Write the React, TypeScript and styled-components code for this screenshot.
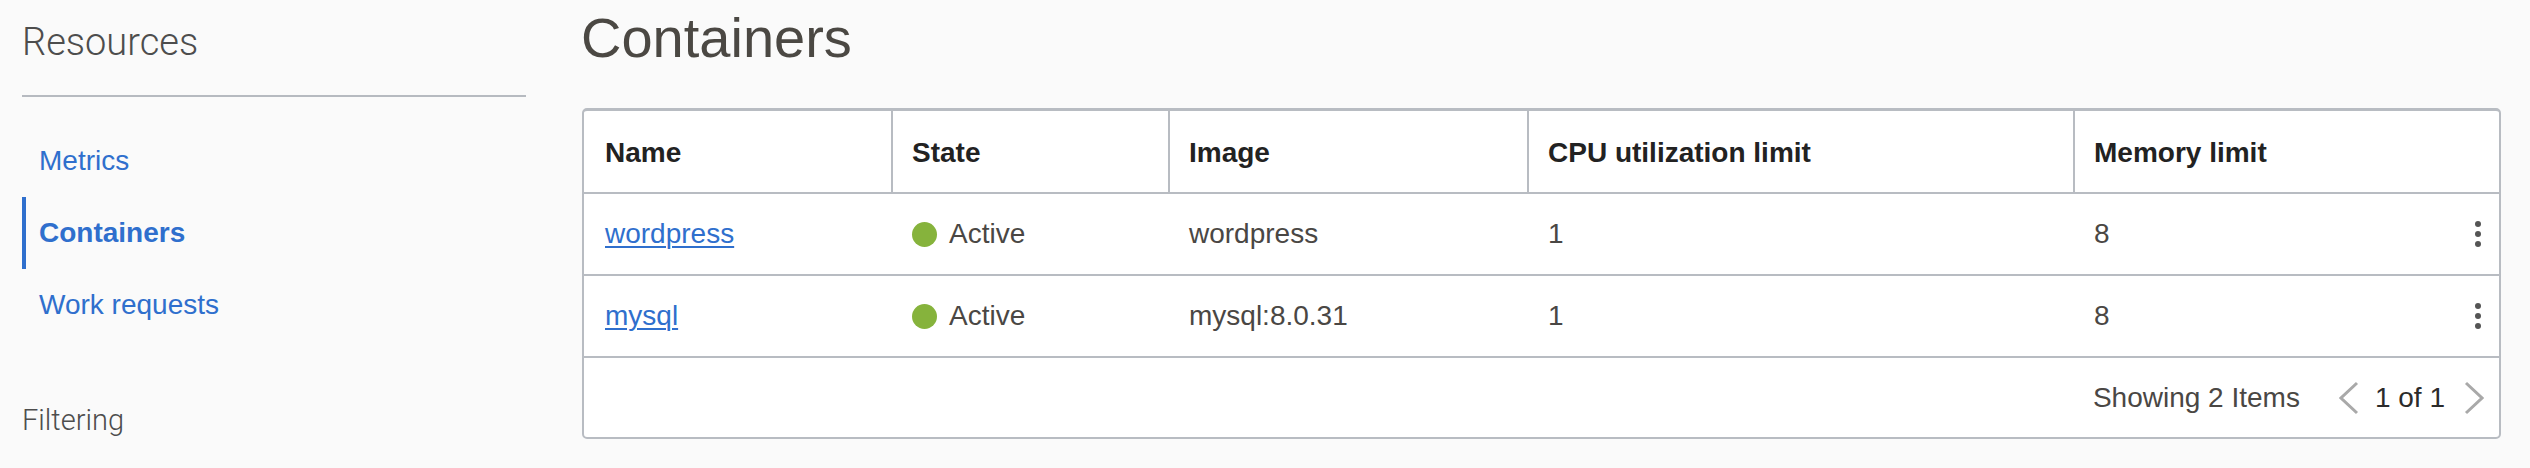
import React from 'react';
import styled, { createGlobalStyle } from 'styled-components';

const linkBlue = '#2f6fcd';
const lineGray = '#b8bcc2';
const textGray = '#4a4744';

const GlobalStyle = createGlobalStyle`
  html, body {
    margin: 0;
    padding: 0;
    background: #fafafa;
  }
  body {
    font-family: "Liberation Sans", Arial, sans-serif;
  }
`;

const Page = styled.div`
  display: flex;
  align-items: flex-start;
  width: 2530px;
  height: 468px;
  background: #fafafa;
  overflow: hidden;
`;

const Sidebar = styled.aside`
  width: 504px;
  margin-left: 22px;
  padding-top: 20px;
`;

const SideTitle = styled.div<{ $size: number; $lh: number }>`
  font-family: Roboto, "Liberation Sans", sans-serif;
  font-weight: 300;
  font-size: ${p => p.$size}px;
  line-height: ${p => p.$lh}px;
  color: #4d4d4d;
`;

const Rule = styled.div`
  height: 2px;
  background: #b6bac0;
  margin: 31px 0 28px;
`;

const NavList = styled.nav`
  display: flex;
  flex-direction: column;
  margin-bottom: 61px;
`;

const NavItem = styled.a<{ $active?: boolean }>`
  display: block;
  height: 72px;
  line-height: 72px;
  font-size: 28px;
  color: ${linkBlue};
  text-decoration: none;
  font-weight: ${p => (p.$active ? 700 : 400)};
  padding-left: ${p => (p.$active ? 13 : 17)}px;
  border-left: ${p => (p.$active ? `4px solid ${linkBlue}` : 'none')};
`;

const Main = styled.main`
  flex: 1;
  margin-left: 56px;
  padding-right: 29px;
  padding-top: 6px;
`;

const Heading = styled.h1`
  margin: 0 0 38px -1px;
  font-size: 56px;
  line-height: 64px;
  font-weight: 400;
  color: #4b4843;
`;

const Table = styled.div`
  background: #fff;
  border: 2px solid ${lineGray};
  border-top-width: 3px;
  border-radius: 5px;
  overflow: hidden;
`;

const columns = '307px 277px 359px 546px 1fr';

const HeadRow = styled.div`
  display: grid;
  grid-template-columns: ${columns};
  height: 81px;
  border-bottom: 2px solid ${lineGray};
`;

const HeadCell = styled.div<{ $first?: boolean }>`
  display: flex;
  align-items: center;
  padding-top: 3px;
  padding-left: ${p => (p.$first ? 21 : 19)}px;
  border-left: ${p => (p.$first ? 'none' : `2px solid ${lineGray}`)};
  font-size: 28px;
  font-weight: 700;
  color: #222;
`;

const Row = styled.div`
  display: grid;
  grid-template-columns: ${columns};
  height: 80px;
  border-bottom: 2px solid ${lineGray};
`;

const Cell = styled.div`
  display: flex;
  align-items: center;
  padding-left: 21px;
  font-size: 28px;
  color: ${textGray};
`;

const LastCell = styled(Cell)`
  justify-content: space-between;
  padding-right: 18px;
`;

const NameLink = styled.a`
  color: ${linkBlue};
  text-decoration: underline;
  text-decoration-thickness: 2px;
  text-underline-offset: 3px;
`;

const Dot = styled.span`
  width: 25px;
  height: 25px;
  border-radius: 50%;
  background: #86b33c;
  margin-right: 12px;
`;

const Kebab = styled.span`
  display: flex;
  flex-direction: column;
  gap: 4px;

  i {
    width: 6px;
    height: 6px;
    border-radius: 50%;
    background: #555;
  }
`;

const Footer = styled.div`
  display: flex;
  justify-content: flex-end;
  align-items: center;
  height: 79px;
  padding-right: 15px;
  font-size: 28px;
  color: ${textGray};
`;

const Summary = styled.span`
  margin-right: 39px;
`;

const PageCount = styled.span`
  color: #2b2b2b;
  margin: 0 19px 0 16px;
`;

const Chevron = ({ dir }: { dir: 'left' | 'right' }) => (
  <svg width="20" height="34" viewBox="0 0 20 34">
    <polyline
      points={dir === 'left' ? '18,2 2,17 18,32' : '2,2 18,17 2,32'}
      fill="none"
      stroke="#a9a9a9"
      strokeWidth="3"
    />
  </svg>
);

const containers = [
  { name: 'wordpress', state: 'Active', image: 'wordpress', cpu: '1', memory: '8' },
  { name: 'mysql', state: 'Active', image: 'mysql:8.0.31', cpu: '1', memory: '8' },
];

const App = () => {
  return (
    <Page>
      <GlobalStyle />
      <Sidebar>
        <SideTitle $size={38} $lh={44}>Resources</SideTitle>
        <Rule />
        <NavList>
          <NavItem>Metrics</NavItem>
          <NavItem $active>Containers</NavItem>
          <NavItem>Work requests</NavItem>
        </NavList>
        <SideTitle $size={29} $lh={36}>Filtering</SideTitle>
      </Sidebar>

      <Main>
        <Heading>Containers</Heading>
        <Table>
          <HeadRow>
            <HeadCell $first>Name</HeadCell>
            <HeadCell>State</HeadCell>
            <HeadCell>Image</HeadCell>
            <HeadCell>CPU utilization limit</HeadCell>
            <HeadCell>Memory limit</HeadCell>
          </HeadRow>
          {containers.map(c => (
            <Row key={c.name}>
              <Cell>
                <NameLink href="#">{c.name}</NameLink>
              </Cell>
              <Cell>
                <Dot />
                {c.state}
              </Cell>
              <Cell>{c.image}</Cell>
              <Cell>{c.cpu}</Cell>
              <LastCell>
                {c.memory}
                <Kebab>
                  <i />
                  <i />
                  <i />
                </Kebab>
              </LastCell>
            </Row>
          ))}
          <Footer>
            <Summary>Showing 2 Items</Summary>
            <Chevron dir="left" />
            <PageCount>1 of 1</PageCount>
            <Chevron dir="right" />
          </Footer>
        </Table>
      </Main>
    </Page>
  );
};

export default App;
